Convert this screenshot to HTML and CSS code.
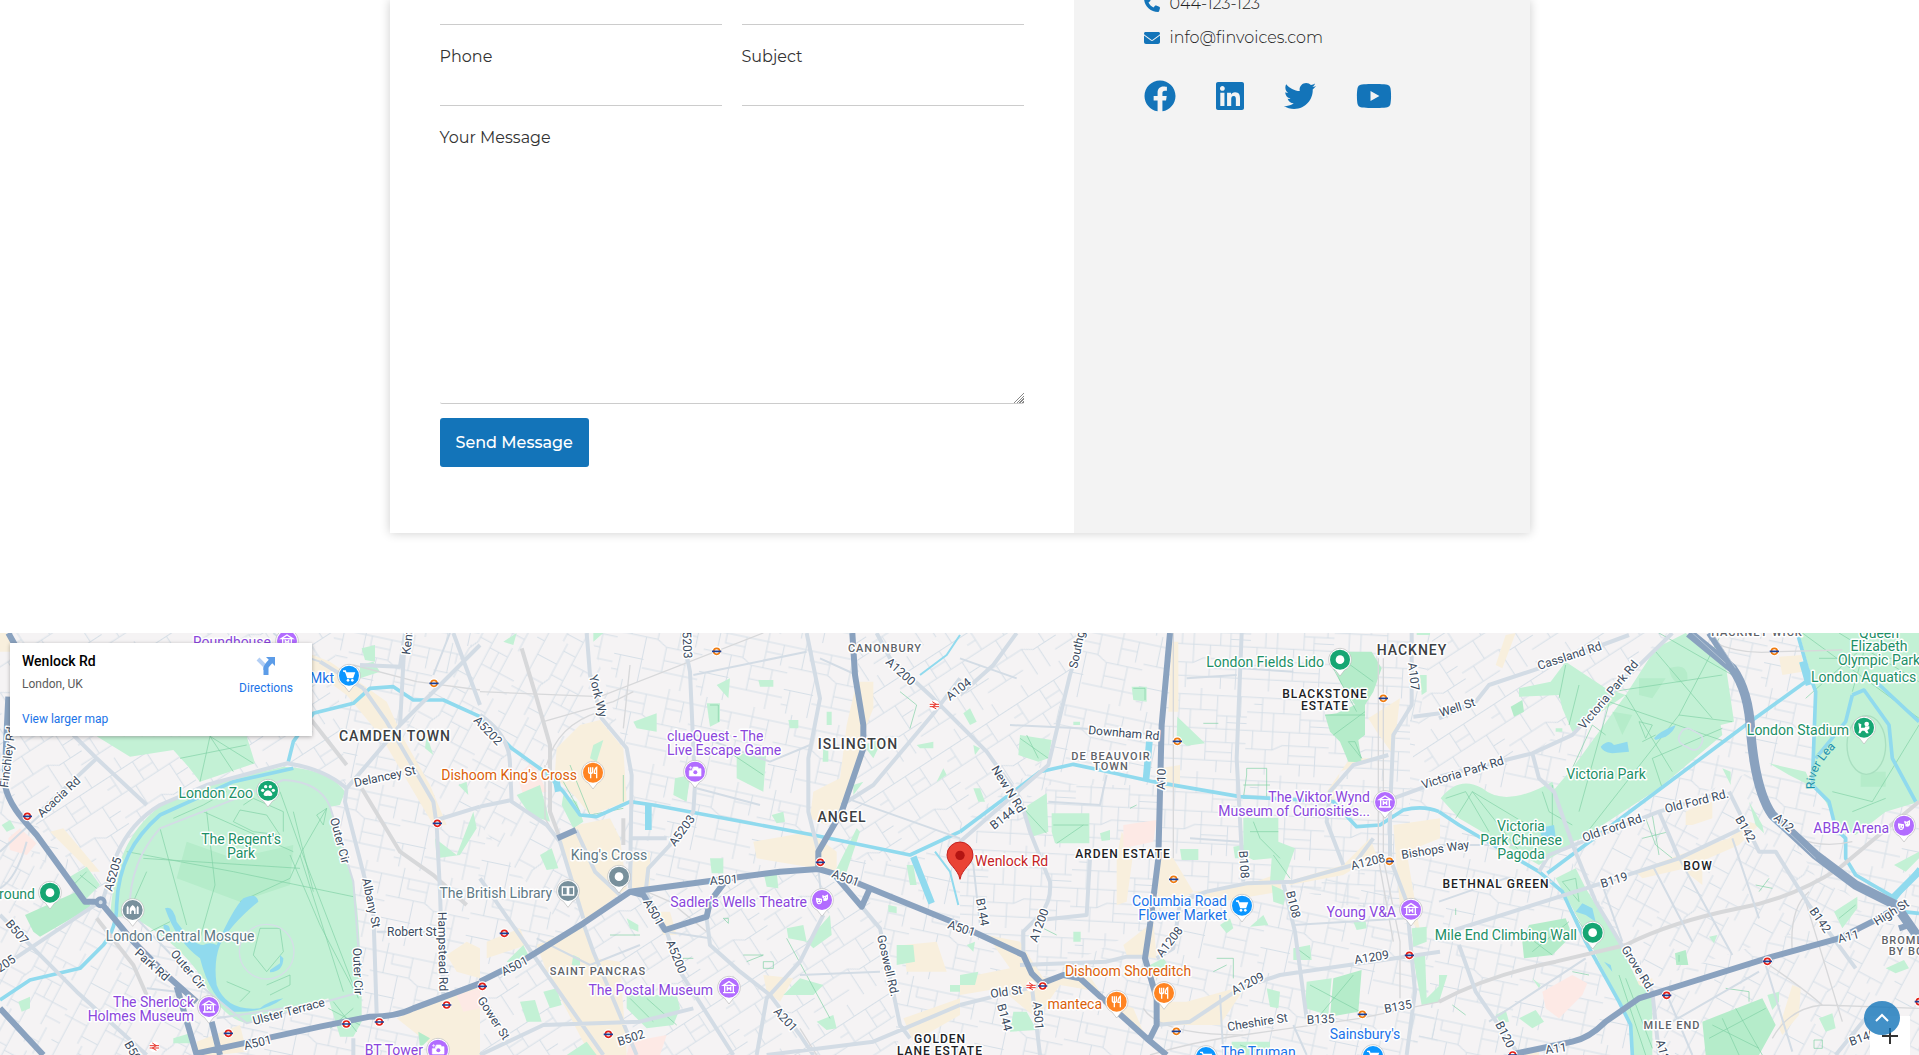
FILE: index.html
```html
<!DOCTYPE html>
<html lang="en">
<head>
<meta charset="utf-8">
<meta name="viewport" content="width=device-width, initial-scale=1">
<title>Contact – Finvoices</title>
<link rel="stylesheet" href="styles.css">
</head>
<body>
<main class="contact">
  <div class="card">
    <form class="form">
      <div class="form-row">
        <input class="field field-short" type="text" aria-label="Name">
        <input class="field field-short" type="email" aria-label="Email">
      </div>
      <div class="form-row">
        <div class="group"><label for="phone">Phone</label><input class="field" id="phone" type="tel"></div>
        <div class="group"><label for="subject">Subject</label><input class="field" id="subject" type="text"></div>
      </div>
      <div class="group"><label for="message">Your Message</label><textarea class="field field-message" id="message"></textarea></div>
      <button class="send" type="submit">Send Message</button>
    </form>
    <aside class="info">
      <ul class="info-list">
        <li><svg class="info-icon" viewBox="0 0 512 512"><path d="M164.900 24.600c-7.700-18.600-28-28.500-47.400-23.200l-88 24C12.100 30.200 0 46 0 64C0 311.400 200.600 512 448 512c18 0 33.800-12.100 38.600-29.500l24-88c5.300-19.400-4.600-39.700-23.200-47.400l-96-40c-16.300-6.800-35.200-2.100-46.300 11.600L304.700 368C234.300 334.700 177.300 277.700 144 207.300L193.300 167c13.700-11.200 18.400-30 11.600-46.300l-40-96z"/></svg><a href="tel:044123123">044-123-123</a></li>
        <li><svg class="info-icon" viewBox="0 0 512 512"><path d="M48 64C21.500 64 0 85.500 0 112c0 15.100 7.100 29.300 19.200 38.400L236.800 313.600c11.400 8.500 27 8.500 38.400 0L492.800 150.400c12.100-9.100 19.200-23.300 19.200-38.400c0-26.500-21.500-48-48-48H48zM0 176V384c0 35.300 28.700 64 64 64H448c35.300 0 64-28.700 64-64V176L294.400 339.200c-22.800 17.100-54 17.100-76.800 0L0 176z"/></svg><a href="mailto:info@finvoices.com">info@finvoices.com</a></li>
      </ul>
      <nav class="social" aria-label="Social media">
        <a href="#facebook" aria-label="Facebook"><svg viewBox="0 0 512 512"><path d="M504 256C504 119 393 8 256 8S8 119 8 256c0 123.780 90.690 226.380 209.250 245V327.690h-63V256h63v-54.640c0-62.150 37-96.480 93.670-96.480 27.140 0 55.520 4.840 55.520 4.840v61h-31.280c-30.800 0-40.410 19.120-40.410 38.730V256h68.780l-11 71.690h-57.780V501C413.310 482.380 504 379.780 504 256z"/></svg></a>
        <a href="#linkedin" aria-label="LinkedIn"><svg viewBox="0 0 448 512"><path d="M416 32H31.900C14.300 32 0 46.500 0 64.300v383.400C0 465.500 14.300 480 31.900 480H416c17.600 0 32-14.500 32-32.300V64.300c0-17.800-14.400-32.300-32-32.300zM135.400 416H69V202.200h66.500V416zm-33.200-243c-21.300 0-38.500-17.300-38.500-38.500S80.900 96 102.200 96c21.200 0 38.500 17.300 38.500 38.500 0 21.300-17.200 38.500-38.500 38.500zm282.100 243h-66.400V312c0-24.800-.5-56.700-34.500-56.700-34.600 0-39.900 27-39.900 54.900V416h-66.400V202.200h63.700v29.200h.9c8.900-16.800 30.600-34.500 62.900-34.500 67.200 0 79.700 44.300 79.700 101.900V416z"/></svg></a>
        <a href="#twitter" aria-label="Twitter"><svg viewBox="0 0 512 512"><path d="M459.370 151.716c.325 4.548.325 9.097.325 13.645 0 138.720-105.583 298.558-298.558 298.558-59.452 0-114.680-17.219-161.137-47.106 8.447.974 16.568 1.299 25.340 1.299 49.055 0 94.213-16.568 130.274-44.832-46.132-.975-84.792-31.188-98.112-72.772 6.498.974 12.995 1.624 19.818 1.624 9.421 0 18.843-1.300 27.614-3.573-48.081-9.747-84.143-51.980-84.143-102.985v-1.299c13.969 7.797 30.214 12.670 47.431 13.319-28.264-18.843-46.781-51.005-46.781-87.391 0-19.492 5.197-37.360 14.294-52.954 51.655 63.675 129.300 105.258 216.365 109.807-1.624-7.797-2.599-15.918-2.599-24.040 0-57.828 46.782-104.934 104.934-104.934 30.213 0 57.502 12.670 76.670 33.137 23.715-4.548 46.456-13.320 66.599-25.340-7.798 24.366-24.366 44.833-46.132 57.827 21.117-2.273 41.584-8.122 60.426-16.243-14.292 20.791-32.161 39.308-52.628 54.253z"/></svg></a>
        <a href="#youtube" aria-label="YouTube"><svg viewBox="0 0 576 512"><path d="M549.655 124.083c-6.281-23.650-24.787-42.276-48.284-48.597C458.781 64 288 64 288 64S117.220 64 74.629 75.486c-23.497 6.322-42.003 24.947-48.284 48.597-11.412 42.867-11.412 132.305-11.412 132.305s0 89.438 11.412 132.305c6.281 23.650 24.787 41.500 48.284 47.821C117.220 448 288 448 288 448s170.780 0 213.371-11.486c23.497-6.321 42.003-24.171 48.284-47.821 11.412-42.867 11.412-132.305 11.412-132.305s0-89.438-11.412-132.305zm-317.510 213.508V175.185l142.739 81.205-142.739 81.201z"/></svg></a>
      </nav>
    </aside>
  </div>
</main>

<section class="map" aria-label="Map of Wenlock Rd, London">
<svg class="map-canvas" viewBox="0 0 1919 422" preserveAspectRatio="xMidYMin slice">
  <defs>
    <pattern id="grid-a" width="260" height="230" patternUnits="userSpaceOnUse" patternTransform="rotate(12)">
      <path class="street" d="M0 30H260M0 92H120L150 110H260M0 160H90M90 185H260M40 0V92M85 92V230M120 30V92M150 110V185M185 0V110M215 110V230M235 30V92M20 160V230M60 30V60H120M0 205H20M150 150H215M185 60H235"/>
    </pattern>
    <pattern id="grid-b" width="240" height="260" patternUnits="userSpaceOnUse" patternTransform="rotate(-33)">
      <path class="street" d="M0 40H240M0 105H240M0 170H130L160 190H240M0 225H100M30 40V105M70 0V40M80 105V170M110 40V105M130 170V260M160 40V105M175 190V260M200 105V190M205 0V40M40 170V225M215 225H240M0 72H30M110 75H160M200 145H240"/>
    </pattern>
    <pattern id="grid-c" width="250" height="240" patternUnits="userSpaceOnUse" patternTransform="rotate(-62)">
      <path class="street" d="M0 25H250M0 75H100L130 90H250M0 130H250M0 190H160M160 210H250M25 75V130M60 0V75M75 130V240M110 25V78M145 90V130M130 130V190M180 25V90M200 130V210M225 90V130M225 0V25M30 190V240M180 170H200M75 160H130"/>
    </pattern>
    <pattern id="grid-d" width="250" height="250" patternUnits="userSpaceOnUse" patternTransform="rotate(3)">
      <path class="street" d="M0 20H250M0 65H160M160 80H250M0 120H250M0 175H80L110 160H250M0 215H250M45 20V120M80 65V175M110 0V65M130 120V215M160 20V120M190 80V160M210 160V250M230 20V80M20 120V175M60 175V250M165 215V250M20 40H45M190 100H250M130 190H210"/>
    </pattern>
    <symbol id="tube" viewBox="-16 -16 32 32"><circle r="15" fill="#fff"/><circle r="9" fill="#fff" stroke="#e32017" stroke-width="5"/><path d="M-14 0H14" stroke="#1c3f94" stroke-width="5"/></symbol>
    <symbol id="overground" viewBox="-16 -16 32 32"><circle r="15" fill="#fff"/><circle r="9" fill="#fff" stroke="#ef7b10" stroke-width="5"/><path d="M-14 0H14" stroke="#1c3f94" stroke-width="5"/></symbol>
    <symbol id="train" viewBox="-16 -16 32 32"><circle r="16" fill="#fff"/><path d="M-14 -3H14M-14 4H14M-6 -11L6 -3L-6 4L6 11" fill="none" stroke="#e7362d" stroke-width="3"/></symbol>
    <symbol id="pin" viewBox="-42 -42 84 96"><path d="M0 49L-14 31A34 34 0 1 1 14 31Z" fill="#fff" stroke="#bbb" stroke-width="2"/><circle r="30" fill="currentColor"/></symbol>
    <symbol id="dot" viewBox="-42 -42 84 96"><use href="#pin" x="-42" y="-42" width="84" height="96"/><circle r="13" fill="#fff"/></symbol>
    <symbol id="cart" viewBox="-42 -42 84 96"><use href="#pin" x="-42" y="-42" width="84" height="96"/><path d="M-18 -14H-11L-4 6H11L16 -8H-9" fill="#fff" stroke="#fff" stroke-width="4"/><circle cx="-3" cy="14" r="4" fill="#fff"/><circle cx="10" cy="14" r="4" fill="#fff"/></symbol>
    <symbol id="museum" viewBox="-42 -42 84 96"><use href="#pin" x="-42" y="-42" width="84" height="96"/><path d="M-17 -7L0 -18L17 -7ZM-13 -7V14M13 -7V14M-18 15H18M-5 9V-1L0 4L5 -1V9" fill="none" stroke="#fff" stroke-width="4"/></symbol>
    <symbol id="food" viewBox="-42 -42 84 96"><use href="#pin" x="-42" y="-42" width="84" height="96"/><path d="M-13 -16V-3Q-13 2 -7 2Q-1 2 -1 -3V-16M-7 -16V17M11 17V-16Q4 -12 4 2H11" fill="none" stroke="#fff" stroke-width="4"/></symbol>
    <symbol id="camera" viewBox="-42 -42 84 96"><use href="#pin" x="-42" y="-42" width="84" height="96"/><path d="M-5 -14H8L11 -9H18V13H-17V-3H-8V-9H-5ZM-13 -17V-7M-18 -12H-8" fill="#fff" stroke="#fff" stroke-width="2"/><circle cx="1" cy="2" r="6" fill="currentColor"/></symbol>
    <symbol id="masks" viewBox="-42 -42 84 96"><use href="#pin" x="-42" y="-42" width="84" height="96"/><path d="M-18 -7L0 -4V6Q-3 14 -10 13Q-19 11 -18 -7ZM1 -15L8 -12L18 -17V-3Q15 6 4 2V-6L1 -7Z" fill="#fff"/><path d="M-13 1H-10M-6 2H-3M7 -7H9M13 -8H15M-12 7Q-8 9 -5 7" stroke="currentColor" stroke-width="3" fill="none"/></symbol>
    <symbol id="paw" viewBox="-42 -42 84 96"><use href="#pin" x="-42" y="-42" width="84" height="96"/><path d="M0 -1C6 -1 14 8 13 13Q10 18 0 15Q-10 18 -13 13C-14 8 -6 -1 0 -1Z" fill="#fff"/><g fill="#fff"><circle cx="-16" cy="-1" r="5"/><circle cx="-7" cy="-12" r="5"/><circle cx="7" cy="-12" r="5"/><circle cx="16" cy="-1" r="5"/></g></symbol>
    <symbol id="mosque" viewBox="-42 -42 84 96"><use href="#pin" x="-42" y="-42" width="84" height="96"/><path d="M-18 12V-8L-15 -13L-12 -8V12ZM12 12V-8L15 -13L18 -8V12ZM-9 12V-4Q-7 -10 0 -15Q7 -10 9 -4V12H4V4Q0 -2 -4 4V12Z" fill="#fff"/></symbol>
    <symbol id="book" viewBox="-42 -42 84 96"><use href="#pin" x="-42" y="-42" width="84" height="96"/><path d="M-17 -12H-2V12H-17ZM2 -12H17V12H2Z" fill="none" stroke="#fff" stroke-width="4"/></symbol>
    <symbol id="stadium" viewBox="-42 -42 84 96"><use href="#pin" x="-42" y="-42" width="84" height="96"/><path d="M-17 -14L-8 -10L-9 0H2L4 -4H16V3L10 8L14 17H7L1 9H-6L-11 17H-17L-14 6Z" fill="#fff"/><circle cx="8" cy="-11" r="7" fill="#fff"/></symbol>
  </defs>

  <!-- terrain, drawn at three units to the pixel -->
  <svg width="1919" height="422" viewBox="0 24 5757 1266">
    <rect y="24" width="5757" height="1266" fill="url(#grid-a)"/>
    <g class="land">
      <path d="M0 24H1000L1040 500L450 560L310 820L0 480Z"/><path d="M0 600L300 850L590 1130L620 1290H0Z"/>
      <path d="M1440 24L1770 24L1890 420V790L1700 920L1440 600L1310 560L1180 350Z"/><path d="M1440 1080L1890 800L2450 740L2640 850L2700 1290H1440Z"/>
      <path d="M2560 24H3250L3120 420L2730 710L2450 700L2600 300Z"/><path d="M3510 24H4230V900L3850 780L3450 900Z"/>
      <path d="M2880 650L3150 480L3480 480L3450 900L3120 1060L2880 910Z"/><path d="M3460 930L3850 780L4230 720L4320 1290H3460Z"/>
      <path d="M4300 24H5000L4600 390L4230 450Z"/><path d="M4700 690L5250 440L5450 760L5620 850L4960 1060Z"/><path d="M4240 750L4600 740L4900 1130L4530 1290H4240Z"/><path d="M4960 1110L5600 900L5757 900V1290H4960Z"/>
    </g>
    <g fill="url(#grid-b)"><path d="M0 24H1000L1040 500L450 560L310 820L0 480Z"/><path d="M1440 1080L1890 800L2450 740L2640 850L2700 1290H1440Z"/><path d="M2560 24H3250L3120 420L2730 710L2450 700L2600 300Z"/></g>
    <g fill="url(#grid-c)"><path d="M0 600L300 850L590 1130L620 1290H0Z"/><path d="M1440 24L1770 24L1890 420V790L1700 920L1440 600L1310 560L1180 350Z"/><path d="M4700 690L5250 440L5450 760L5620 850L4960 1060Z"/><path d="M4960 1110L5600 900L5757 900V1290H4960Z"/></g>
    <g fill="url(#grid-d)"><path d="M3510 24H4230V900L3850 780L3450 900Z"/><path d="M2880 650L3150 480L3480 480L3450 900L3120 1060L2880 910Z"/></g>
    <g fill="url(#grid-a)"><path d="M3460 930L3850 780L4230 720L4320 1290H3460Z"/><path d="M4240 750L4600 740L4900 1130L4530 1290H4240Z"/></g>
    <path fill="url(#grid-b)" d="M4300 24H5000L4600 390L4230 450Z"/>

    <!-- west: Regent's Park and Camden -->
    <g>
      <path class="urban" d="M925 85L990 110L1090 180L1160 230L1210 340L1290 480L1340 600H1300L1140 330L1040 210L930 130ZM150 620L190 610L300 740L270 740ZM590 1250L720 1200L740 1280L650 1290H590ZM1190 1180L1330 1120L1440 1080V1290H1330ZM1340 990L1400 950L1440 970V1060L1370 1040ZM0 24H20L50 80H0Z"/>
      <path class="hospital" d="M25 640L60 610L110 655L80 690L30 675ZM1370 1110L1440 1090V1150L1390 1160Z"/>
      <path class="park" d="M460 560C520 500 650 470 850 425C950 430 1010 460 1035 500L1020 540L990 545C1000 600 1030 680 1060 770C1080 880 1080 1000 1085 1100L1085 1190L1060 1235H1020L985 1120L740 1195C680 1180 640 1130 600 1050C540 960 440 900 390 870L330 880C340 740 370 640 460 560ZM290 334H740L765 415L600 470L565 425L520 375L390 395ZM210 755L260 725L300 780L250 830ZM5 600L30 585L45 610L20 620ZM1085 70L1125 60V110L1095 105ZM1280 330L1300 390L1275 370ZM1375 480L1400 470L1405 510ZM1305 640L1370 690L1420 560L1430 610L1380 690L1310 700ZM55 1130L90 1115V1150L65 1160ZM520 1240L570 1225V1255H520ZM1080 120L1120 110L1140 140L1080 160Z"/>
      <path class="park-deep" d="M75 870L230 800L275 845L120 935L100 920ZM1255 1220L1290 1240L1260 1270ZM560 650L700 700L880 660L870 780L720 830L530 760Z"/>
      <path class="track" d="M380 680L700 740L1060 815M480 610L560 900M430 700L900 730M620 560L645 780L600 940M610 560L880 680M840 500L905 680L1075 1120M900 690L1030 1100M870 690L960 900L1070 1110M720 830L870 760L905 680L980 550M880 560L940 800M600 470L630 334L760 415M540 400L740 360M630 334L700 440M520 580L610 540L680 500M720 555L800 570L840 630L760 620L700 590ZM730 540L760 520L850 560V620M780 910H840L850 980L800 1040L760 990ZM680 1070L750 1100L720 1130M800 1080L870 1050V1080L810 1110M440 740L400 830M450 920L510 890M1000 1130L1070 1220M985 1150L1080 1200M990 1210L1060 1150M950 570L980 550L970 600ZM240 750L290 790M220 780L260 740"/>
      <path class="lake" d="M495 850Q520 840 530 890Q580 960 610 960Q630 950 650 960Q700 850 730 820Q770 800 775 830Q690 900 660 960Q640 1010 650 1080Q680 1160 780 1150Q800 1130 850 1120Q790 1165 700 1160Q630 1120 600 1000Q530 950 495 850ZM490 900Q510 895 510 918Q490 922 490 900ZM810 1035L840 1015V990L850 1000Q850 1040 810 1042Z"/>
      <path class="canal" d="M0 1125L90 1065L240 1030L310 960Q350 910 350 840C355 720 400 640 480 570L700 470L880 430M865 410L880 350L940 265L1060 235L1110 190L1180 185L1240 225L1330 225L1440 275"/>
      <path class="rail" d="M930 280L1040 420M1085 490L1200 680L1300 750L1400 840M290 880L400 1020L440 1110"/>
      <path class="rail thin" d="M1060 120L1250 170L1440 195"/>
      <path class="road" d="M310 820L350 690C380 620 430 570 480 540L620 480L860 415Q970 430 1040 490L1160 350L1200 300L1440 60M1040 490L1035 530L1120 860L1130 1165M1090 190L1160 290L1300 530L1310 600L1320 800L1330 1110M300 830L0 1030M120 560L290 400L220 330M290 400L440 540M0 870L230 1100L440 1290M960 110L1090 190M1080 120L1200 125L1215 24M1200 300L1215 24M1310 585L1440 545M1060 1240V1290M1360 24L1440 240"/>
      <path class="road small" d="M0 680L120 570M80 650Q50 760 0 790M390 880Q380 720 480 610L850 465Q960 470 990 545L1060 770L1085 1100L740 1195Q660 1130 600 1080L400 870M440 1090L530 1100M650 1180L850 1150M1130 920H1300M820 24L900 90L960 110M1350 24L1300 150"/>
      <circle class="path-ring" cx="800" cy="980" r="82"/>
      <path class="highway" d="M25 24L45 60M25 215C22 280 15 400 15 480C25 540 75 590 110 630L255 830L300 830L400 950L510 1060L590 1130M530 1085L590 1290M635 1190L660 1290M590 1285L730 1255L960 1205L1110 1175Q1190 1175 1240 1150L1440 1075M0 1150L130 1290"/>
      <circle class="roundabout" cx="302" cy="832" r="12"/>
    </g>

    <!-- King's Cross, Islington, Angel -->
    <g transform="translate(1440 0)">
      <path class="urban" d="M225 440L230 370L300 300L360 285L430 370L440 530L330 570L290 520L240 470ZM240 650L290 600L390 580L420 640L440 790L310 890ZM460 700L510 680V790H450ZM170 960L310 900L350 1000L420 1010L440 1290H330L200 1040ZM20 950L120 910L140 960L20 1000ZM1130 170H1180V250L1160 300L1150 400L1100 540L1040 600L990 580L1000 500L1080 460L1100 300ZM820 650L990 620L1070 680V740L830 700ZM520 860L570 860L590 930H550ZM850 1050L940 1060L900 1130L860 1100ZM1270 960L1370 950L1400 1040L1280 1040ZM1270 1180L1440 1120V1170L1300 1250Z"/>
      <path class="hospital" d="M110 450L160 410L200 500L130 510ZM450 1250L560 1230L540 1290H440Z"/>
      <path class="park" d="M110 510L180 480L210 590L150 570ZM250 510L290 530L310 590L280 610L245 540ZM460 290L530 265V320L470 310ZM680 235H720V290L690 305ZM710 180L750 160L745 220ZM770 390L860 370L850 500L770 460ZM585 460L630 450L620 530L580 510ZM875 570L910 560L915 590L890 595ZM690 700H730V745H695ZM850 740H890L895 790L860 785ZM340 360L370 345L350 410L330 400ZM180 690L215 670L235 730L200 735ZM440 880L475 900V920L450 910ZM120 1130L165 1125L185 1190L140 1190ZM190 1100L230 1090L245 1140L210 1150ZM80 1010L130 960L145 990L100 1015ZM280 990L300 1000V1025L275 1020ZM440 1110L590 1110L600 1150L580 1200L500 1210L440 1150ZM260 1290L320 1250L350 1290ZM920 910L970 900L980 950L925 940ZM980 950L1050 870L1055 930L1000 970ZM1060 750L1130 610L1140 620L1100 740ZM910 1110L960 1060L1030 1080L1000 1110ZM1250 960L1300 960L1305 1010L1250 1020ZM1010 1190L1060 1170L1070 1210L1040 1215ZM1120 480L1150 470L1120 510ZM1150 360L1210 340L1180 400ZM1280 720L1300 720L1310 780H1290ZM1310 360L1360 350V370H1320ZM340 24H370L340 50ZM70 50L110 24L100 60ZM925 285H955V310H930ZM1040 260H1055V300H1040ZM1030 360H1045V410H1028ZM1410 1080H1440V1100H1410ZM1225 840L1250 845V865L1225 860ZM1390 430L1400 450L1370 470ZM835 165H880V185H840Z"/>
      <path class="track" d="M270 420L330 570L430 550M250 470L300 560M430 450V530M690 240H715V290M500 1120L590 1200M450 1120L520 1190M790 990H850L800 1010M390 930H480M920 940L1050 1180M850 1010H880V1030H850ZM1260 200L1310 240L1290 310M730 880H745V895ZM640 1000H610V1020M760 390L850 450"/>
      <path class="canal" d="M0 275L95 370L200 445L250 500L300 570L350 575L450 530L520 540L760 585L1000 630L1290 690L1440 620"/>
      <path class="canal wide" d="M505 540V615M1300 695L1355 835M225 445L235 500"/>
      <path class="canal narrow" d="M1365 680L1410 740L1435 840M1440 30L1400 90L1320 150"/>
      <path class="rail" d="M125 70L170 220L210 360L210 560L240 640M430 580V660"/>
      <path class="rail thin" d="M0 200L360 215L850 24M190 290L400 230L460 200M200 420Q230 300 360 260M450 120L430 310M500 800L570 830L680 920M960 1210L1010 1290M195 420V580L225 630"/>
      <path class="road" d="M320 24L330 150L365 280L440 370L455 450L450 790M607 24L630 140L645 480L640 560L570 660L505 730L497 800L560 920L600 1040L760 1290M0 270Q90 330 90 420L95 530L200 600L240 650L310 880M0 545L95 525M288 615L345 740L420 810M310 895L340 980L470 1290M0 760L160 990L370 1290M0 1290L190 1200L480 1190L640 1150M980 24L1020 220L985 400L985 560L1015 680M1190 24L1230 100L1360 220L1440 300M1440 160L1365 260L1180 480L1085 540M680 880L690 960L780 1040L870 1110L960 1230L1000 1290M1145 845L1200 910L1260 1200L1290 1240M860 1290L1180 1250L1440 1140M1030 870L960 1010L860 1120L830 1290M455 640H560"/>
      <path class="road small" d="M645 330L870 410L990 360M650 490L840 540M1015 732L1030 870M690 940L560 920M170 940L330 1020L480 960M960 1050L1200 1040M1100 520L1440 640M1020 100L1130 150M640 150L980 80"/>
      <path class="highway" d="M0 1070L140 1000L310 895L450 800L690 768L900 740L1015 732L1060 745L1170 790L1440 900M1015 732V680L1085 560L1150 370V300L1125 150L1117 24M1060 745L1145 845L1170 790M450 800L490 810L555 915L680 875L690 830L735 770M232 640L288 615"/>
    </g>

    <!-- Hoxton, Shoreditch, London Fields -->
    <g transform="translate(2880 0)">
      <path class="urban" d="M635 50H655V260H625ZM600 430L660 420V490H610ZM485 620L520 680L500 830L470 840V700ZM600 690L640 700L700 800L620 850H590ZM700 800L860 780L970 740L960 800L780 830ZM980 770L1150 720L1230 640L1250 690L1150 750L990 780ZM80 930L180 950L250 1060L380 1040L420 1100L300 1080L230 1180L120 1090L0 1110V1060L150 1030ZM600 1130L680 1130L860 1080L780 1200H600ZM430 1120L520 1150L550 1220ZM490 960L580 890L590 1000L500 990ZM1100 500L1170 400L1240 400L1140 440L1120 530ZM1225 280L1320 220L1300 390L1250 320ZM1300 600L1440 580V640L1340 680L1380 920L1320 850Z"/>
      <path class="hospital" d="M490 600L590 585L580 650L490 670Z"/>
      <path class="park" d="M180 330L275 345L265 400L235 410L175 390ZM190 550L260 505L265 620L215 635ZM275 565H388V655H285L275 620ZM652 275L735 355L680 362L650 340ZM515 185H560V230L520 225ZM850 578H955V650L1005 670L970 770H930L935 700L880 705L850 690ZM660 672H715V705H665ZM420 625L450 615V645L425 648ZM780 900L810 880L820 910L800 925ZM570 1020L610 1000L635 1035H575ZM160 1160L200 1160L230 1215L150 1220ZM1040 1070L1115 1060L1105 1170L1035 1150ZM920 1090L960 1100L955 1150L930 1145ZM0 1050L55 1040L45 1080H0ZM10 265L30 250L50 290L30 300ZM40 360L60 370L45 390ZM40 490L60 490L75 530L55 530ZM1370 20H1410V30H1370ZM1000 970L1050 960L1055 1005H1000ZM935 780L980 800L970 840L940 830ZM870 905L910 870L925 900ZM340 920H362V950H340ZM1380 150H1400V200L1385 210ZM1355 910L1400 905V950L1360 965ZM820 665L850 660V700H825ZM340 290H360V300H340ZM1180 890L1215 875L1220 910L1190 915ZM20 960L45 950L40 980ZM1360 1000L1395 985L1400 1120L1440 1080V1130L1385 1140ZM815 1250L930 1250V1290H815Z"/>
      <path class="park-deep" d="M1120 120L1165 80L1235 80L1265 130L1240 200L1215 240L1215 330L1195 345L1205 412L1165 410L1140 350L1110 320L1095 270L1130 265L1185 240L1140 170ZM1120 1060L1205 1035L1195 1160L1110 1175Z"/>
      <path class="track" d="M190 550L260 625M290 655L370 600M280 600H385M180 340L265 400M200 330L235 400M1130 90L1240 170M1120 130L1190 260M1095 270H1215M1120 330L1215 260M1165 350L1205 400L1185 350ZM860 450V430H920V520H850ZM850 480H930M880 590L900 640L960 700M870 620H955M940 690L990 760M1050 1080L1200 1160M1080 1170L1180 1050M520 190H555V225M770 1000H820V1060M800 1020L760 1040M730 295H775M250 910L290 930M1010 970L1050 1000M840 1260L930 1290M510 550L530 540"/>
      <path class="canal" d="M0 620L240 440L340 418L420 435L580 470L840 515L1120 530L1190 605L1260 600L1330 555Q1390 540 1437 560"/>
      <path class="canal wide" d="M568 350L558 465"/>
      <path class="rail thin" d="M1270 100V700L1320 950V1120M1255 100V700L1300 950M570 1290Q700 1250 850 1230L1200 1180L1440 1130M640 24V700M550 1150Q600 1230 850 1230"/>
      <path class="road" d="M170 24L100 120L0 210M0 300L80 380L180 520L210 620L270 770Q275 830 240 870L190 920V990M370 24L330 150L265 420L0 650M845 24L830 400L850 770M0 1140L100 1115L245 1080M590 1200L690 1190L840 1090L960 1050L1440 980M590 1000L640 970L660 830L740 800L860 775L1000 770L1180 720L1240 640M970 775L1005 920L1040 1180M1355 24V240L1300 330L1290 560V700L1340 830L1365 1100L1340 1290M1300 520L1437 470M1285 390L1180 420L1110 500L1100 590L1150 720M1360 275L1440 265M215 1080L240 1290M390 700L380 870L240 885M180 1020L440 1010L500 995H560"/>
      <path class="road small" d="M150 300L360 310L600 330M440 450L420 540L265 530M0 100L170 160M780 1110L790 1290M0 650L40 720L60 900M680 160L830 150M845 130L1000 140M690 640L840 650M1000 900L1340 880M1000 1200L1040 1290"/>
      <path class="highway" d="M630 24L605 300L595 700L570 900L555 1000L590 1120V1200L570 1240M0 905L40 920L190 990L215 1045L245 1075L310 1050L360 1060L560 1240L620 1290"/>
    </g>

    <!-- Victoria Park, Bow, Olympic Park -->
    <g transform="translate(4317 0)">
      <path class="urban" d="M170 120L200 30L230 24L190 130ZM590 740L720 690L870 640L930 590L960 600L900 660L740 730L610 760ZM780 540L820 530V580L760 600L740 600V560ZM740 740L790 730V780ZM1020 95L1090 90V140L1030 150ZM1060 1080L1085 1090L1080 1170L1030 1230L1020 1210ZM210 1280L300 1265V1290H210ZM540 1080L640 1060V1100L560 1110ZM480 870L540 1040L580 1080L540 1050Z"/>
      <path class="hospital" d="M310 1100L400 1050L445 1075L430 1110L360 1180L320 1150Z"/>
      <path class="park" d="M650 70L740 24L860 120L885 290L845 300L850 330L660 490L430 640L400 650L340 500L400 430L560 210ZM240 190L335 170L380 110L500 190L560 210L400 320L370 250L360 210L240 215ZM5 520Q60 450 130 490Q200 550 340 470L400 660L300 720L60 580ZM1080 24H1440V530L1340 560L1250 630L1200 610L1160 530L1120 480L1130 200ZM350 760L410 730L440 790L545 960L600 1080L640 1100V1290H580L570 1180L480 1010L440 920ZM1185 860L1255 815V850L1210 910ZM930 530L970 600L975 625L950 600ZM990 415L1100 440L1120 485L1050 450ZM170 1170L200 1155L210 1190L185 1195ZM240 1180L290 1155L315 1190L280 1210ZM1140 1180L1180 1165L1190 1210L1160 1220ZM985 1110L1020 1100V1130L1000 1155ZM1340 1030L1395 1005L1410 1030L1370 1045ZM810 935L835 930L825 955ZM0 1050L25 1050L0 1130ZM1365 720L1440 680V700L1400 740ZM850 430L875 440V480ZM350 310H370V320H350ZM280 1060L305 1080L300 1090Z"/>
      <path class="park-deep" d="M250 950L270 900L380 880L400 930L340 990L255 1000ZM790 1190L970 1120L1010 1200L960 1290H800ZM215 245L250 225L255 260L225 275ZM708 985L740 975L748 1020L712 1020ZM600 160L680 160L640 220L600 210ZM690 130Q750 110 745 165Q700 190 690 130ZM520 260L580 270L550 330ZM1265 440H1340V485H1265ZM1255 330H1310V390H1255Z"/>
      <path class="track" d="M420 560L520 200L850 150M480 220L860 350M560 210L700 440M430 640L720 270L880 290M660 24L880 150M650 80L820 280M670 490L640 400L850 310M720 270L840 40M500 330L460 300L400 430M20 520L80 500L150 620M50 580L100 500L250 690M100 500L350 650M310 500L330 560L400 600M340 480V620M380 120L360 220M420 180L390 300M600 290L640 300L620 340ZM610 350L650 330M620 580L650 660L700 700M610 640L690 620M640 570L660 690M370 770L410 760L420 830L370 770M400 860L440 920M1090 24L1440 280M1200 24L1440 170M1140 100H1420M1180 500L1300 530L1440 300M1240 560L1340 520M1100 220L1280 60L1240 200M820 1200L960 1270M810 1240L980 1150M850 1180L900 1290M890 1150L970 1290M950 780L1000 790M960 800L990 760M1200 880L1250 840M540 1050L620 1290M560 1060L640 1270M40 1140L80 1170M50 850V870M1125 1245H1150V1270H1125ZM400 1040L450 1050M860 1090L930 1100V1130M260 930L340 990M280 980L390 890M720 990V1010"/>
      <path class="lake" d="M485 365Q510 340 525 360L565 350L570 380L520 385Q490 380 485 365ZM645 340Q660 320 710 300Q705 320 680 335L650 345ZM300 610L345 600L350 635L310 640ZM410 860L430 835L460 850L470 890L440 870ZM495 1010L515 1020L520 1040Z"/>
      <ellipse class="stadium" cx="1282" cy="360" rx="58" ry="88"/>
      <rect class="pitch" x="720" y="315" width="70" height="52" rx="20" transform="rotate(28 752 342)"/>
      <path class="canal" d="M0 560L60 600L300 740L370 800L440 950L540 1130L575 1200L580 1290M325 745L920 300L1100 170M1075 24L1105 130L1130 200L1120 480L1170 530L1190 610L1220 640V700L1250 750L1370 820L1440 730"/>
      <path class="canal" d="M1240 210L1275 195L1350 300L1360 400L1430 530M1240 210L1220 290L1130 400M1300 160L1440 290M1390 860L1440 865"/>
      <path class="canal wide" d="M1090 110L1110 180M1360 820L1440 740"/>
      <path class="rail" d="M0 1130Q150 1050 350 1010L560 960Q700 890 900 850Q1060 820 1200 730L1440 530"/>
      <path class="rail thin" d="M820 50Q900 90 1010 80L1210 75M1080 640Q1150 670 1240 650M990 1020Q1080 1080 1150 1140L1440 1150M1000 1240Q1050 1150 1150 1140M1060 980Q1050 850 1110 800M1100 830L1210 1190"/>
      <path class="road" d="M0 280L110 230L150 180L300 130L570 30M700 24L560 160L400 330L280 385L0 455M280 385L300 460L345 500L405 670L470 830L560 980L640 1100L660 1290M405 660L660 560L860 500M440 790L720 700L930 600M440 790L0 930M660 560L720 700M870 500L960 680L1010 680L1110 840L1250 1030M60 960L110 1100L240 1290M300 740L330 690L405 660M1280 1180L1190 1290"/>
      <path class="road small" d="M0 830L200 760L340 770M720 700L880 990M490 780L550 950M640 720L760 950M880 640L960 880M150 1190L440 1000M680 1100L760 1290M980 1020L1060 1280M0 660H280M700 1190L960 1040"/>
      <path class="highway wide" d="M750 24L880 130Q930 200 935 320Q950 500 1000 570L1130 690L1250 780L1370 840L1440 940"/>
      <path class="highway" d="M810 24L880 130M210 1290L400 1250Q450 1240 500 1190L600 1120L680 1095L1000 995L1200 940L1300 890L1370 850M1380 910L1410 900"/>
      <path class="highway-line" d="M760 24L860 115M820 24L890 130M1010 585L1130 700"/>
    </g>

    <!-- stations -->
    <g>
      <use href="#tube" x="66" y="558" width="32" height="32"/><use href="#tube" x="1296" y="579" width="32" height="32"/><use href="#tube" x="1023" y="1181" width="32" height="32"/><use href="#tube" x="1122" y="1175" width="32" height="32"/><use href="#tube" x="1324" y="1124" width="32" height="32"/><use href="#tube" x="669" y="1209" width="32" height="32"/><use href="#tube" x="1497" y="909" width="32" height="32"/><use href="#tube" x="1431" y="1068" width="32" height="32"/><use href="#tube" x="1809" y="1212" width="32" height="32"/><use href="#tube" x="2445" y="696" width="32" height="32"/><use href="#tube" x="3112" y="1067" width="32" height="32"/><use href="#tube" x="4212" y="975" width="32" height="32"/><use href="#tube" x="5286" y="993" width="32" height="32"/><use href="#tube" x="4984" y="1095" width="32" height="32"/><use href="#tube" x="4522" y="1274" width="32" height="32"/><use href="#tube" x="5742" y="1114" width="32" height="32"/>
      <use href="#overground" x="1286" y="159" width="32" height="32"/><use href="#overground" x="2134" y="63" width="32" height="32"/><use href="#overground" x="4134" y="204" width="32" height="32"/><use href="#overground" x="3516" y="333" width="32" height="32"/><use href="#overground" x="3505" y="747" width="32" height="32"/><use href="#overground" x="4152" y="693" width="32" height="32"/><use href="#overground" x="4071" y="1152" width="32" height="32"/><use href="#overground" x="3513" y="1203" width="32" height="32"/><use href="#overground" x="5307" y="63" width="32" height="32"/>
      <use href="#train" x="447" y="1249" width="32" height="32"/><use href="#train" x="2787" y="225" width="32" height="32"/><use href="#train" x="3077" y="1068" width="32" height="32"/>
    </g>

    <!-- places -->
    <g class="violet-pin"><use href="#museum" x="819" y="6" width="84" height="96"/><use href="#museum" x="585" y="1104" width="84" height="96"/><use href="#camera" x="1272" y="1232" width="84" height="96"/><use href="#camera" x="2043" y="398" width="84" height="96"/><use href="#masks" x="2424" y="783" width="84" height="96"/><use href="#museum" x="2145" y="1046" width="84" height="96"/><use href="#museum" x="4113" y="489" width="84" height="96"/><use href="#museum" x="4191" y="812" width="84" height="96"/><use href="#masks" x="5670" y="560" width="84" height="96"/></g>
    <g class="blue-pin"><use href="#cart" x="1005" y="110" width="84" height="96"/><use href="#cart" x="3684" y="800" width="84" height="96"/><use href="#cart" x="3576" y="1254" width="84" height="96"/><use href="#cart" x="4077" y="1251" width="84" height="96"/></g>
    <g class="green-pin"><use href="#paw" x="762" y="455" width="84" height="96"/><use href="#dot" x="108" y="761" width="84" height="96"/><use href="#dot" x="3978" y="62" width="84" height="96"/><use href="#stadium" x="5550" y="266" width="84" height="96"/><use href="#dot" x="4736" y="881" width="84" height="96"/></g>
    <g class="slate-pin"><use href="#mosque" x="356" y="813" width="84" height="96"/><use href="#dot" x="1815" y="713" width="84" height="96"/><use href="#book" x="1662" y="756" width="84" height="96"/></g>
    <g class="orange-pin"><use href="#food" x="1737" y="401" width="84" height="96"/><use href="#food" x="3308" y="1088" width="84" height="96"/><use href="#food" x="3450" y="1062" width="84" height="96"/></g>
    <path d="M2880 763C2874 730 2841 718 2841 690A39 39 0 1 1 2919 690C2919 718 2886 730 2880 763Z" fill="#ea4335" stroke="#c5221f" stroke-width="3"/><circle cx="2880" cy="691" r="14" fill="#b31412"/>
  </svg>

  <g class="label road-label">
    <text transform="translate(410 22) rotate(-83)">Kent</text>
    <text transform="translate(8 155) rotate(-83)">Finchley Rd</text>
    <text transform="translate(42 185) rotate(-43)">Acacia Rd</text>
    <text transform="translate(330 186) rotate(75)">Outer Cir</text>
    <text transform="translate(362 246) rotate(78)">Albany St</text>
    <text transform="translate(355 154) rotate(-12)">Delancey St</text>
    <text x="387" y="303">Robert St</text>
    <text transform="translate(438 279) rotate(89)">Hampstead Rd</text>
    <text transform="translate(112 259) rotate(-74)">A5205</text>
    <text transform="translate(5 291) rotate(50)">B507</text>
    <text transform="translate(-12 348) rotate(-35)">A5205</text>
    <text transform="translate(134 321) rotate(42)">Park Rd</text>
    <text transform="translate(170 321) rotate(50)">Outer Cir</text>
    <text transform="translate(353 315) rotate(88)">Outer Cir</text>
    <text transform="translate(254 392) rotate(-15)">Ulster Terrace</text>
    <text transform="translate(245 417) rotate(-14)">A501</text>
    <text transform="translate(124 411) rotate(60)">B507</text>
    <text transform="translate(473 88) rotate(46)">A5202</text>
    <text transform="translate(589 43) rotate(76)">York Wy</text>
    <text transform="translate(682 -9) rotate(87)">A5203</text>
    <text transform="translate(885 30) rotate(42)">A1200</text>
    <text transform="translate(950 68) rotate(-38)">A104</text>
    <text transform="translate(675 214) rotate(-54)">A5203</text>
    <text transform="translate(710 252) rotate(-4)">A501</text>
    <text transform="translate(831 244) rotate(20)">A501</text>
    <text transform="translate(643 269) rotate(60)">A501</text>
    <text transform="translate(666 309) rotate(68)">A5200</text>
    <text transform="translate(504 343) rotate(-27)">A501</text>
    <text transform="translate(877 303) rotate(77)">Goswell Rd.</text>
    <text transform="translate(477 367) rotate(57)">Gower St</text>
    <text transform="translate(773 379) rotate(47)">A201</text>
    <text transform="translate(619 413) rotate(-18)">B502</text>
    <text transform="translate(947 295) rotate(18)">A501</text>
    <text transform="translate(1077 36) rotate(-78)">Southgate Rd</text>
    <text transform="translate(1088 101) rotate(5)">Downham Rd</text>
    <text transform="translate(1408 30) rotate(83)">A107</text>
    <text transform="translate(991 136) rotate(58)">New N Rd</text>
    <text transform="translate(994 197) rotate(-38)">B144</text>
    <text transform="translate(1165 157) rotate(-88)">A10</text>
    <text transform="translate(1239 218) rotate(86)">B108</text>
    <text transform="translate(1286 259) rotate(76)">B108</text>
    <text transform="translate(1352 237) rotate(-14)">A1208</text>
    <text transform="translate(1402 226) rotate(-9)">Bishops Way</text>
    <text transform="translate(1162 325) rotate(-52)">A1208</text>
    <text transform="translate(976 266) rotate(80)">B144</text>
    <text transform="translate(1037 310) rotate(-70)">A1200</text>
    <text transform="translate(1355 331) rotate(-9)">A1209</text>
    <text transform="translate(1234 362) rotate(-27)">A1209</text>
    <text transform="translate(991 365) rotate(-8)">Old St</text>
    <text transform="translate(997 372) rotate(75)">B144</text>
    <text transform="translate(1033 369) rotate(85)">A501</text>
    <text transform="translate(1228 398) rotate(-9)">Cheshire St</text>
    <text transform="translate(1307 391) rotate(-3)">B135</text>
    <text transform="translate(1385 380) rotate(-10)">B135</text>
    <text transform="translate(1423 156) rotate(-17)">Victoria Park Rd</text>
    <text transform="translate(1539 37) rotate(-18)">Cassland Rd</text>
    <text transform="translate(1584 97) rotate(-50)">Victoria Park Rd</text>
    <text transform="translate(1441 84) rotate(-18)">Well St</text>
    <text transform="translate(1666 180) rotate(-14)">Old Ford Rd.</text>
    <text transform="translate(1584 209) rotate(-19)">Old Ford Rd.</text>
    <text transform="translate(1735 186) rotate(60)">B142</text>
    <text transform="translate(1773 186) rotate(40)">A12</text>
    <text transform="translate(1602 255) rotate(-17)">B119</text>
    <text transform="translate(1809 278) rotate(55)">B142</text>
    <text transform="translate(1877 293) rotate(-32)">High St</text>
    <text transform="translate(1839 310) rotate(-14)">A11</text>
    <text transform="translate(1621 316) rotate(58)">Grove Rd.</text>
    <text transform="translate(1495 391) rotate(63)">B120</text>
    <text transform="translate(1546 421) rotate(-8)">A11</text>
    <text transform="translate(1656 408) rotate(75)">A12</text>
    <text transform="translate(1851 413) rotate(-20)">B140</text>
  </g>
  <path id="lea" d="M1815 156Q1812 136 1838 112" fill="none"/>
  <text class="label river-label"><textPath href="#lea">River Lea</textPath></text>

  <g class="label district">
    <text x="395" y="108">CAMDEN TOWN</text><text x="858" y="116">ISLINGTON</text><text x="842" y="189">ANGEL</text><text x="1412" y="22">HACKNEY</text>
  </g>
  <g class="label district small-district">
    <text x="1325" y="65">BLACKSTONE<tspan x="1325" dy="12">ESTATE</tspan></text><text x="1123" y="225">ARDEN ESTATE</text><text x="1698" y="237">BOW</text><text x="1496" y="255">BETHNAL GREEN</text><text x="940" y="410">GOLDEN<tspan x="940" dy="12">LANE ESTATE</tspan></text>
  </g>
  <g class="label district minor-district">
    <text x="885" y="19">CANONBURY</text><text x="598" y="342">SAINT PANCRAS</text><text x="1111" y="127">DE BEAUVOIR<tspan x="1111" dy="10">TOWN</tspan></text><text x="1757" y="3">HACKNEY WICK</text><text x="1672" y="396">MILE END</text><text x="1912" y="311">BROMLEY-<tspan x="1912" dy="11">BY BOW</tspan></text>
  </g>

  <g class="label poi green-text">
    <text class="end" x="253" y="165">London Zoo</text><text class="mid" x="241" y="211">The Regent's<tspan x="241" dy="14">Park</tspan></text><text class="end" x="35" y="266">Playground</text><text class="end" x="1324" y="34">London Fields Lido</text><text class="mid" x="1879" y="5">Queen<tspan x="1879" dy="13">Elizabeth</tspan><tspan x="1879" dy="14">Olympic Park</tspan></text><text x="1811" y="49">London Aquatics</text><text class="end" x="1849" y="102">London Stadium</text><text class="mid" x="1606" y="146">Victoria Park</text><text class="mid" x="1521" y="198">Victoria<tspan x="1521" dy="14">Park Chinese</tspan><tspan x="1521" dy="14">Pagoda</tspan></text><text class="end" x="1577" y="307">Mile End Climbing Wall</text>
  </g>
  <g class="label poi violet-text">
    <text class="end" x="271" y="14">Roundhouse</text><text class="end" x="194" y="374">The Sherlock<tspan x="194" dy="14">Holmes Museum</tspan></text><text class="end" x="423" y="422">BT Tower</text><text x="667" y="108">clueQuest - The<tspan x="667" dy="14">Live Escape Game</tspan></text><text class="end" x="807" y="274">Sadler's Wells Theatre</text><text class="end" x="713" y="362">The Postal Museum</text><text class="end" x="1370" y="169">The Viktor Wynd<tspan x="1370" dy="14">Museum of Curiosities...</tspan></text><text class="end" x="1396" y="284">Young V&amp;A</text><text class="end" x="1889" y="200">ABBA Arena</text>
  </g>
  <g class="label poi blue-text">
    <text class="end" x="334" y="50">Mkt</text><text class="end" x="1227" y="273">Columbia Road<tspan x="1227" dy="14">Flower Market</tspan></text><text class="mid" x="1365" y="406">Sainsbury's</text><text x="1221" y="424">The Truman</text>
  </g>
  <g class="label poi slate-text">
    <text class="mid" x="180" y="308">London Central Mosque</text><text class="end" x="552" y="265">The British Library</text><text class="mid" x="609" y="227">King's Cross</text>
  </g>
  <g class="label poi orange-text">
    <text class="end" x="577" y="147">Dishoom King's Cross</text><text class="mid" x="1128" y="343">Dishoom Shoreditch</text><text class="end" x="1102" y="376">manteca</text>
  </g>
  <text class="label poi red-text" x="975" y="233">Wenlock Rd</text>
</svg>

<div class="place-card">
  <div class="place">
    <h2>Wenlock Rd</h2>
    <p>London, UK</p>
    <a href="#larger-map">View larger map</a>
  </div>
  <a class="directions" href="#directions">
    <svg width="20" height="20" viewBox="0 0 20 20"><path d="M2 3L9 10V14" fill="none" stroke="#b3cff5" stroke-width="4"/><path d="M10 19V12Q10 10 15 5" fill="none" stroke="#5c9ce8" stroke-width="5"/><path d="M10 1H19V10Z" fill="#5c9ce8"/></svg>
    Directions
  </a>
</div>
<button class="zoom-in" type="button" aria-label="Zoom in"><svg width="16" height="16" viewBox="0 0 16 16"><path d="M8 0V16M0 8H16" stroke="#333" stroke-width="2"/></svg></button>
</section>

<a class="to-top" href="#top" aria-label="Back to top"><svg width="16" height="10" viewBox="0 0 16 10"><path d="M2 8L8 2L14 8" fill="none" stroke="#fff" stroke-width="2"/></svg></a>
</body>
</html>
```
FILE: styles.css
```css
* { box-sizing: border-box; }

body {
  margin: 0;
  min-height: 100vh;
  display: flex;
  flex-direction: column;
  overflow: hidden;
  background: #fff;
  color: #333;
  font: 400 16px/24px Montserrat, Inter, sans-serif;
}

a { color: inherit; text-decoration: none; }

/* contact card */
.contact { padding: 0 20px 100px; }
.card {
  max-width: 1140px;
  margin: 0 auto;
  display: grid;
  grid-template-columns: 3fr 2fr;
  background: #fff;
  box-shadow: 0 0 10px rgba(0, 0, 0, 0.2);
}
.form { padding: 0 50px 66px; }
.form-row {
  display: grid;
  grid-template-columns: 1fr 1fr;
  gap: 20px;
  margin-bottom: 20px;
}
.group { display: flex; flex-direction: column; }
.field {
  display: block;
  width: 100%;
  height: 37px;
  padding: 4px 0;
  border: 0;
  border-bottom: 1px solid #ccc;
  border-radius: 0;
  background: transparent;
  color: inherit;
  font: inherit;
  outline: 0;
}
.field-short { height: 25px; }
.field-message { height: 254px; resize: vertical; border-radius: 2px; }
.field-message::-webkit-resizer {
  background:
    linear-gradient(135deg, #fff 50%, transparent 50%) right bottom / 11px 11px no-repeat,
    repeating-linear-gradient(135deg, #888 0 1px, #fff 1px 2px) right bottom / 11px 11px no-repeat;
}
.send {
  height: 49px;
  margin-top: 14px;
  padding: 0 16px;
  border: 0;
  border-radius: 3px;
  background: #1374b9;
  color: #fff;
  font: inherit;
  font-weight: 500;
}

.info { padding: 0 70px; background: #f3f3f3; }
.info-list {
  margin: -13px 0 25px;
  padding: 0;
  list-style: none;
  color: #222;
  font-weight: 300;
  line-height: 34px;
}
.info-list li { display: flex; align-items: center; gap: 10px; }
.info-icon { width: 16px; height: 16px; fill: #1374b9; }
.social { display: flex; gap: 40px; }
.social svg { display: block; height: 32px; fill: #1374b9; }

/* map */
.map {
  position: relative;
  flex: 1 0 422px;
  overflow: hidden;
  background: #f5f3f4;
  font-family: Roboto, sans-serif;
}
.map-canvas { position: absolute; inset: 0; width: 100%; height: 100%; }
.land { fill: #f5f3f4; }
.street { fill: none; stroke: #d6dfe7; stroke-width: 3; }
.urban { fill: #f8efdd; }
.hospital { fill: #fde9e5; }
.park { fill: #c3f1d5; }
.park-deep { fill: #b5ecca; }
.track { fill: none; stroke: #7fd0a5; stroke-width: 2; }
.lake { fill: #90daee; }
.canal { fill: none; stroke: #90daee; stroke-width: 11; stroke-linejoin: round; }
.canal.wide { stroke-width: 20; }
.canal.narrow { stroke-width: 6; }
.rail { fill: none; stroke: #d7d8da; stroke-width: 12; }
.rail.thin { stroke-width: 4; }
.road { fill: none; stroke: #d3dce5; stroke-width: 12; stroke-linejoin: round; }
.road.small { stroke-width: 6; }
.path-ring { fill: none; stroke: #d5dee7; stroke-width: 4; }
.highway { fill: none; stroke: #8aa2bf; stroke-width: 18; stroke-linejoin: round; }
.highway.wide { stroke-width: 28; }
.highway-line { fill: none; stroke: #c5d1de; stroke-width: 2; }
.roundabout { fill: #d5dee7; stroke: #8aa2bf; stroke-width: 12; }
.stadium { fill: #c3f1d5; stroke: #a9dfc0; stroke-width: 4; }
.pitch { fill: none; stroke: #d5dee7; stroke-width: 5; }

.violet-pin { color: #b26cff; }
.blue-pin { color: #0b96ff; }
.green-pin { color: #16a673; }
.slate-pin { color: #78909c; }
.orange-pin { color: #ff8422; }

.label {
  paint-order: stroke;
  stroke: #fff;
  stroke-width: 3px;
  stroke-linejoin: round;
}
.road-label { font-size: 12px; fill: #3a4a5e; }
.river-label { font-size: 12px; fill: #1a8fb0; stroke: #c3f1d5; stroke-width: 1px; }
.district {
  font-size: 14px;
  font-weight: 500;
  letter-spacing: 1px;
  text-anchor: middle;
  fill: #3c4043;
}
.small-district { font-size: 12px; fill: #202124; }
.minor-district { font-size: 11px; fill: #5f6368; }
.poi { font-size: 14px; }
.mid { text-anchor: middle; }
.end { text-anchor: end; }
.green-text { fill: #1c8f66; }
.violet-text { fill: #8a46dc; }
.blue-text { fill: #1a73e8; }
.slate-text { fill: #607985; }
.orange-text { fill: #db5f0a; }
.red-text { fill: #c5221f; }

.place-card {
  position: absolute;
  top: 10px;
  left: 10px;
  width: 302px;
  height: 93px;
  padding: 8px 19px 0 12px;
  display: flex;
  justify-content: space-between;
  background: #fff;
  box-shadow: 0 1px 4px rgba(0, 0, 0, 0.3);
  font-size: 12px;
  line-height: 16px;
}
.place h2 {
  margin: 0 0 5px;
  color: #000;
  font-size: 14px;
  font-weight: 500;
  line-height: 20px;
}
.place p { margin: 0 0 19px; color: #5b5b5b; }
.place a, .directions { color: #1a73e8; }
.directions {
  display: flex;
  flex-direction: column;
  align-items: center;
  gap: 4px;
  padding-top: 5px;
}
.zoom-in {
  position: absolute;
  top: 383px;
  right: 9px;
  width: 40px;
  height: 81px;
  padding: 0 0 42px;
  border: 0;
  background: #fff;
}
.zoom-in svg { display: block; margin: 0 auto; }
.to-top {
  position: fixed;
  right: 19px;
  bottom: 20px;
  width: 36px;
  height: 34px;
  display: flex;
  align-items: center;
  justify-content: center;
  border-radius: 50%;
  background: rgba(19, 116, 185, 0.8);
}
```
